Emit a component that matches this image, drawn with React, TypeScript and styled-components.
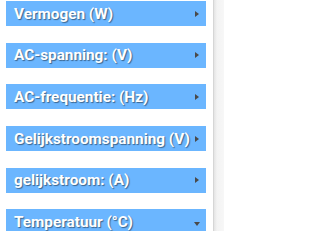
import styled, { createGlobalStyle } from 'styled-components';

const GlobalStyle = createGlobalStyle`
    html, body {
        margin: 0;
        padding: 0;
        background: #ffffff;
        overflow: hidden;
    }
`;

const Page = styled.div`
    display: flex;
    flex-direction: row;
    width: 224px;
    height: 231px;
    overflow: hidden;
`;

const Menu = styled.div`
    display: flex;
    flex-direction: column;
    gap: 16.7px;
    width: 213px;
    padding: 1px 7px 0 6px;
    box-sizing: border-box;
    background: #ffffff;
`;

const Gutter = styled.div`
    flex: 1;
    border-left: 1px solid #d6d6d6;
    background: linear-gradient(to right, #e4e4e4 0px, #f3f3f3 3px, #f7f7f7 100%);
`;

const Header = styled.div`
    display: flex;
    flex-direction: row;
    align-items: center;
    justify-content: space-between;
    flex-shrink: 0;
    height: 25px;
    padding: 0 5px 0 8px;
    box-sizing: border-box;
    background: #6bb6ff;
    cursor: pointer;
`;

const Title = styled.div`
    font-family: Roboto, "Liberation Sans", sans-serif;
    font-size: 15.3px;
    font-weight: bold;
    color: #ffffff;
    text-shadow: 1px 1px 1px rgba(0, 0, 0, 0.45);
    white-space: nowrap;
`;

const Caret = styled.span<{ $open?: boolean }>`
    width: 0;
    height: 0;
    ${({ $open }) =>
        $open
            ? `
        border-left: 3.5px solid transparent;
        border-right: 3.5px solid transparent;
        border-top: 4px solid #4a4a4a;
        margin-top: 4px;
        margin-right: 1px;
    `
            : `
        border-top: 3.5px solid transparent;
        border-bottom: 3.5px solid transparent;
        border-left: 4px solid #4a4a4a;
        margin-right: 2.5px;
    `}
`;

const sections = [
    { name: 'Vermogen (W)' },
    { name: 'AC-spanning: (V)' },
    { name: 'AC-frequentie: (Hz)' },
    { name: 'Gelijkstroomspanning (V)' },
    { name: 'gelijkstroom: (A)' },
    { name: 'Temperatuur (°C)', open: true },
];

export default function App() {
    return (
        <>
            <GlobalStyle />
            <Page>
                <Menu>
                    {sections.map((s) => (
                        <Header key={s.name}>
                            <Title>{s.name}</Title>
                            <Caret $open={s.open} />
                        </Header>
                    ))}
                </Menu>
                <Gutter />
            </Page>
        </>
    );
}
